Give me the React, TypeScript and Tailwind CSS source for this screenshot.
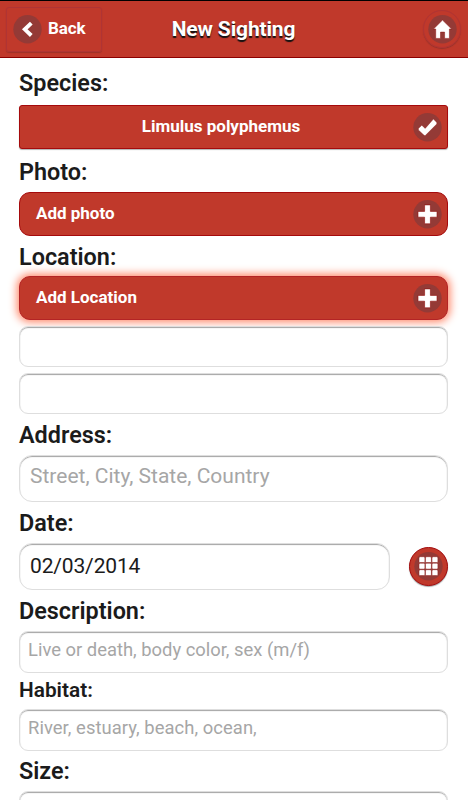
import React, { useState } from 'react';
import clsx from 'clsx';

type IconName = 'back' | 'home' | 'check' | 'plus' | 'grid';

function DiscIcon({ name }: { name: IconName }) {
  return (
    <svg width="29" height="29" viewBox="0 0 29 29" className="block shrink-0">
      <circle cx="14.5" cy="14.3" r="14.2" fill="#943a36" />
      {name === 'back' && (
        <path d="M18.3 8.1L11.8 14.3L18.3 20.5" fill="none" stroke="#fff" strokeWidth="3.9" />
      )}
      {name === 'home' && (
        <path
          d="M14.5 5.1L23.6 14H21.4V23.4H16.6V17.1H12.5V23.4H7.7V14H5.5Z"
          fill="#fff"
          stroke="#8e1512"
          strokeWidth="0.5"
        />
      )}
      {name === 'check' && (
        <path
          d="M5.4 15.5L8.8 12.2L12.2 15.4L20.4 6.1L23.8 9.4V11L12.3 22.5H11.3L5.4 17Z"
          fill="#fff"
          stroke="#8e1512"
          strokeWidth="0.4"
        />
      )}
      {name === 'plus' && (
        <path
          d="M11.6 4.9H17.4V11.4H24V17.2H17.4V23.8H11.6V17.2H5V11.4H11.6Z"
          fill="#fff"
          stroke="#8e0d0b"
          strokeWidth="0.6"
        />
      )}
      {name === 'grid' && (
        <g fill="#fff" stroke="#8a1a18" strokeWidth="0.5">
          {[5, 11.5, 18].map((y) =>
            [5, 11.5, 18].map((x) => (
              <rect key={`${x}-${y}`} x={x} y={y - 0.3} width="5.9" height="5.9" rx="1.2" />
            ))
          )}
        </g>
      )}
    </svg>
  );
}

function Label({ children, className }: { children: React.ReactNode; className: string }) {
  return (
    <label
      className={clsx(
        'flex items-end leading-6 font-semibold text-[#1b1b1b] whitespace-nowrap',
        className
      )}
    >
      {children}
    </label>
  );
}

interface BarButtonProps {
  text: string;
  icon: IconName;
  className?: string;
  centered?: boolean;
}

function BarButton({ text, icon, className, centered }: BarButtonProps) {
  return (
    <button
      className={clsx(
        'flex h-11 w-full shrink-0 items-center border bg-[#c0392b] pr-[5px] pl-4 text-[17px] font-bold text-white',
        className
      )}
    >
      <span className={clsx('flex-1 pb-px', centered ? 'pr-[7px] text-center' : 'text-left')}>{text}</span>
      <DiscIcon name={icon} />
    </button>
  );
}

interface FieldProps {
  value?: string;
  placeholder?: string;
  className: string;
}

function Field({ value = '', placeholder, className }: FieldProps) {
  const [text, setText] = useState(value);
  return (
    <input
      type="text"
      value={text}
      placeholder={placeholder}
      onChange={(e) => setText(e.target.value)}
      className={clsx(
        'block w-full min-w-0 shrink-0 border border-[#dedede] bg-white text-[#1b1b1b] shadow-[inset_0_1px_1px_rgba(0,0,0,0.36)] outline-none placeholder:text-[#a6a6a6]',
        className
      )}
    />
  );
}

export default function App() {
  return (
    <div className="flex h-[800px] w-[468px] flex-col overflow-hidden bg-white font-[Roboto,sans-serif]">
      <header className="flex h-[58px] shrink-0 items-center justify-between border-t border-b border-t-black border-b-[#8c0000] bg-[#c0392b] pr-[7px] pl-[6px] text-white">
        <button className="flex h-[45px] w-24 items-center gap-[6px] rounded-[3px] border border-[#b03434] pl-[6px] text-[17px] font-bold tracking-[-0.1px] shadow-[0_1px_1px_rgba(90,40,40,0.35)]">
          <DiscIcon name="back" />
          <span className="pb-px">Back</span>
        </button>
        <h1 className="pt-[2px] text-[21px] font-bold tracking-[-0.15px] [text-shadow:0_1.5px_1px_#111]">
          New Sighting
        </h1>
        <div className="flex w-24 justify-end">
          <button className="flex size-[38px] items-center justify-center rounded-full border border-[#b03434] shadow-[0_1px_1px_rgba(90,40,40,0.4)]">
            <DiscIcon name="home" />
          </button>
        </div>
      </header>

      <main className="flex flex-col pr-5 pl-[19px]">
        <Label className="h-[47px] pb-[10px] text-[23.4px]">Species:</Label>
        <BarButton
          text="Limulus polyphemus"
          icon="check"
          centered
          className="rounded-[3px] border-[#a50a0c] shadow-[0_1px_1px_rgba(0,0,0,0.3)]"
        />

        <Label className="h-[43px] pb-2 text-[23.4px]">Photo:</Label>
        <BarButton text="Add photo" icon="plus" className="rounded-[11px] border-[#a50a0c]" />

        <Label className="h-10 pb-[7px] text-[23.4px]">Location:</Label>
        <BarButton
          text="Add Location"
          icon="plus"
          className="rounded-[11px] border-[#b42425] shadow-[0_0_8px_2px_#ff8465]"
        />
        <Field className="mt-[6px] h-[41px] rounded-[9px] px-2 text-lg" />
        <Field className="mt-[6px] h-[41px] rounded-[9px] px-2 text-lg" />

        <Label className="h-[41px] pb-2 text-[23.4px]">Address:</Label>
        <Field
          placeholder="Street, City, State, Country"
          className="h-[47px] rounded-[13px] px-[10px] pb-[6px] text-[21px]"
        />

        <Label className="h-[41px] pb-2 text-[23.4px]">Date:</Label>
        <div className="flex items-center justify-between">
          <div className="w-[371px]">
            <Field
              value="02/03/2014"
              className="h-[47px] rounded-[13px] px-[10px] pb-px text-[21px] tracking-[-0.15px]"
            />
          </div>
          <button className="flex size-[39px] items-center justify-center rounded-full border border-[#a50a0c] bg-[#c0392b] shadow-[0_1px_1px_rgba(0,0,0,0.35)]">
            <DiscIcon name="grid" />
          </button>
        </div>

        <Label className="h-[41px] pb-2 text-[23.4px]">Description:</Label>
        <Field
          placeholder="Live or death, body color, sex (m/f)"
          className="h-[42px] rounded-[9px] px-2 pb-[6px] text-[18.4px]"
        />

        <Label className="h-9 pb-[7px] text-[20.8px]">Habitat:</Label>
        <Field
          placeholder="River, estuary, beach, ocean,"
          className="h-[42px] rounded-[9px] px-2 pb-[6px] text-[18.4px] tracking-[0.06px]"
        />

        <Label className="h-10 pb-2 text-[23.4px]">Size:</Label>
        <Field className="h-[42px] rounded-[9px] px-2 text-lg" />
      </main>
    </div>
  );
}
